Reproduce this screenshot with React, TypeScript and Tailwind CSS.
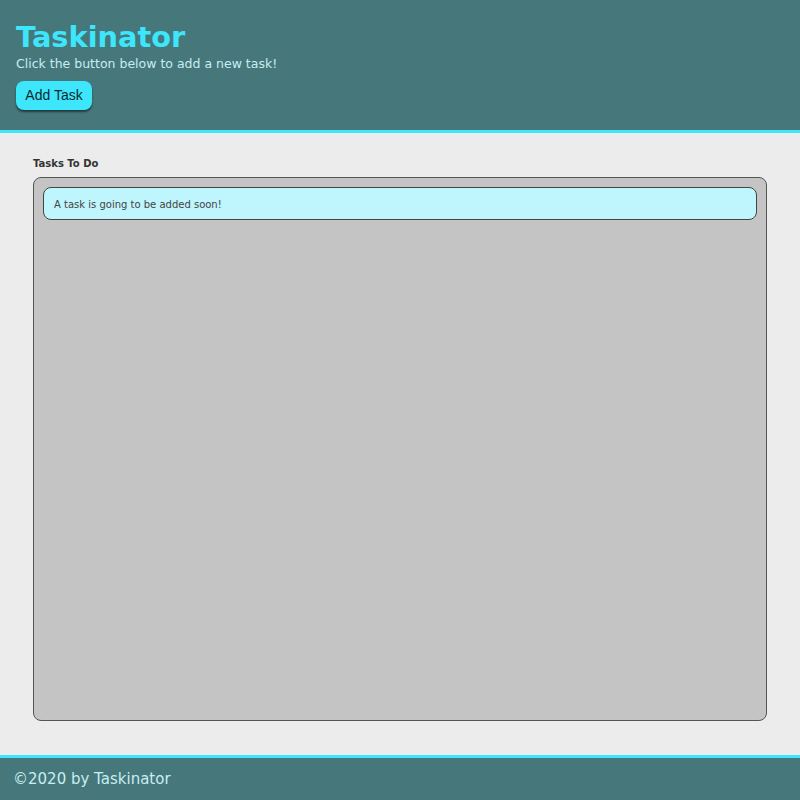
import React from "react";

const App = () => {
  return (
    <div className="min-h-screen flex flex-col bg-[#ececec] font-['DejaVu_Sans',sans-serif]">
      <header className="h-[133px] bg-[#46777b] border-b-[3px] border-[#3ee6fb] px-4 pt-[19px]">
        <h1 className="text-[28.8px] leading-[36px] font-bold text-[#3ee6fb]">Taskinator</h1>
        <p className="text-[12.5px] leading-[18px] text-[#c6eef1]">Click the button below to add a new task!</p>
        <button className="mt-[8px] h-[29px] w-[76px] rounded-lg bg-[#3ee6fb] text-[14px] text-[#0c2a2e] font-['Liberation_Sans',sans-serif] shadow-[0_2px_2px_rgba(0,0,0,0.5)]">
          Add Task
        </button>
      </header>

      <main className="flex-1 px-[33px] pt-[24px] pb-[34px]">
        <h2 className="text-[10px] leading-[14px] font-bold text-[#333]">Tasks To Do</h2>
        <ul className="mt-[6px] h-[544px] rounded-lg border border-[#555] bg-[#c4c4c4] p-[9px]">
          <li className="h-[33px] flex items-center rounded-lg border border-[#444] bg-[#bff5fc] px-[10px] pt-[2px] text-[10px] text-[#444]">
            A task is going to be added soon!
          </li>
        </ul>
      </main>

      <footer className="h-[46px] border-t-[3px] border-[#3ee6fb] bg-[#46777b] px-[13px] flex items-center">
        <p className="text-[15px] text-[#c6eef1]">©2020 by Taskinator</p>
      </footer>
    </div>
  );
};

export default App;
